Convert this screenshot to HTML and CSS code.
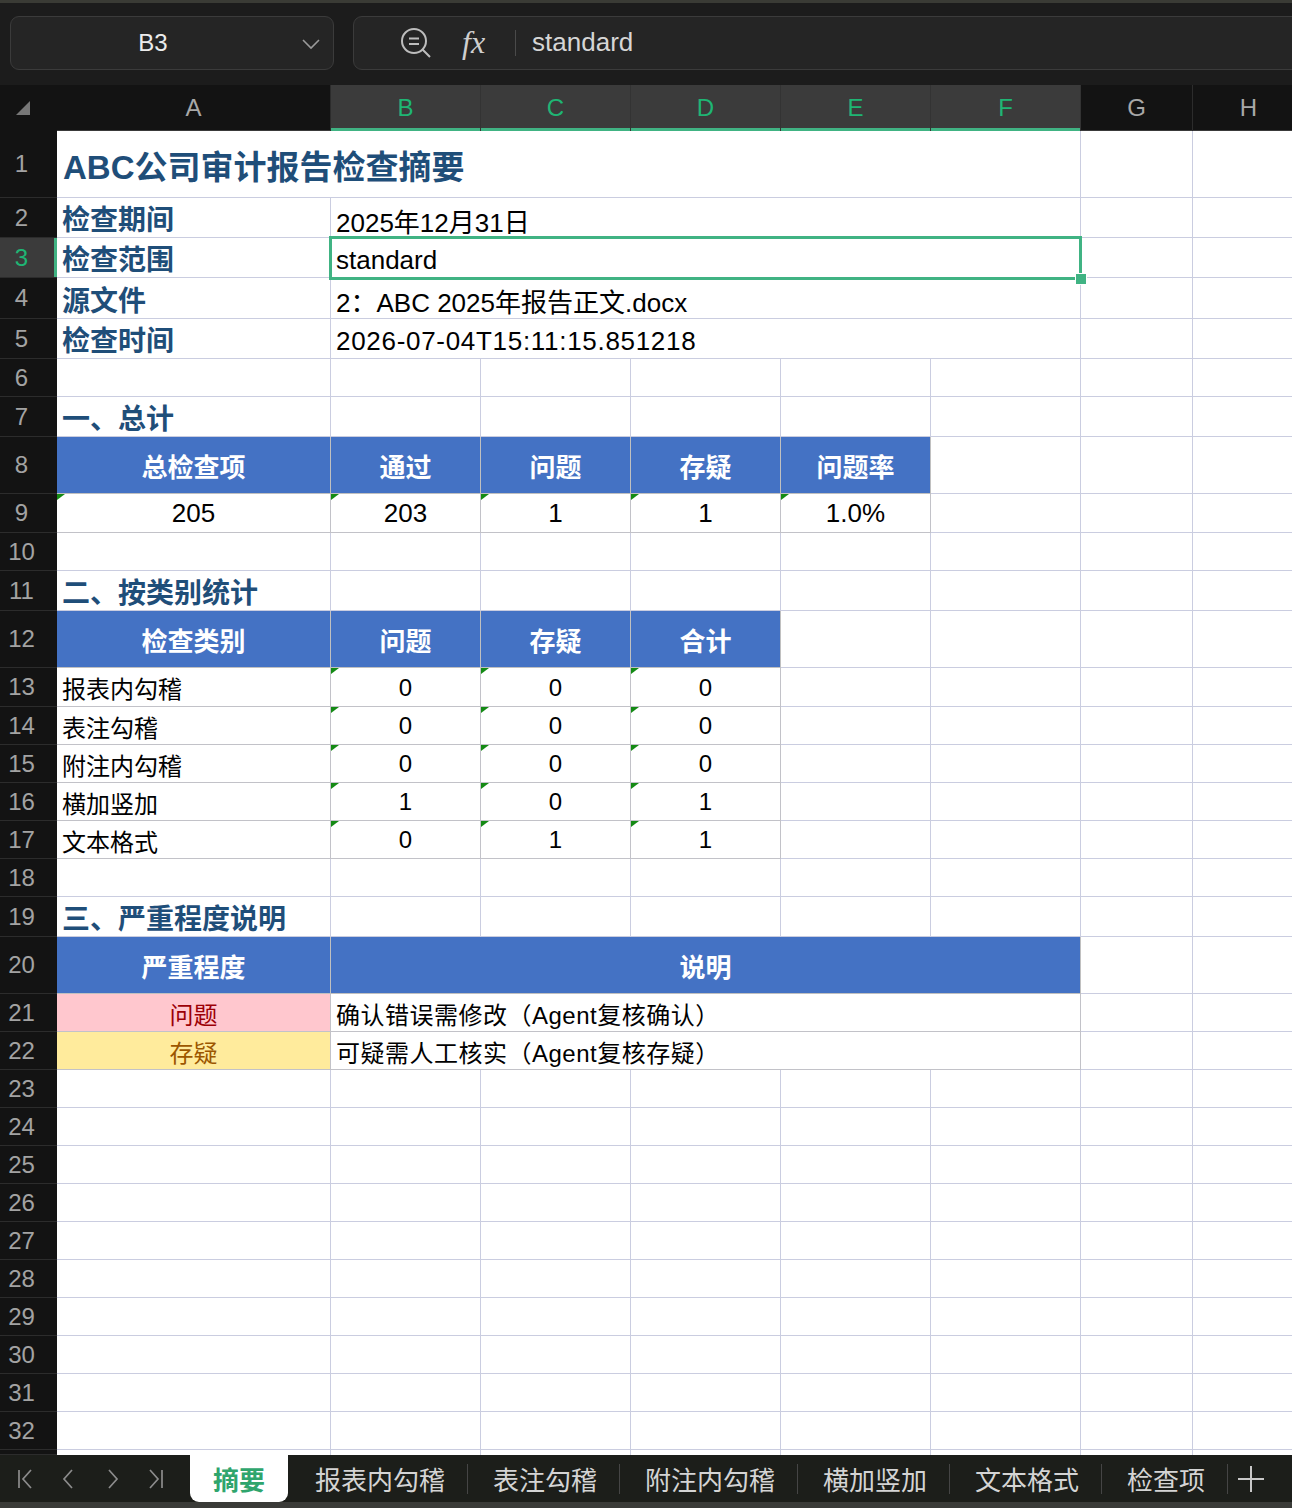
FILE: index.html
```html
<!DOCTYPE html>
<html lang="zh-CN">
<head>
  <meta charset="UTF-8" />
  <meta name="viewport" content="width=device-width, initial-scale=1.0"/>
  <title>ABC公司审计报告检查摘要</title>
  <link rel="stylesheet" href="styles.css">
</head>
<body>
  <div class="topbar">
    <div class="namebox">
      <span class="cellref">B3</span>
      <svg class="chev" width="20" height="14" viewBox="0 0 20 14"><path d="M2 3 L10 11 L18 3" /></svg>
    </div>
    <div class="formula">
      <svg class="zoomout" width="34" height="34" viewBox="0 0 34 34">
        <circle cx="15" cy="15" r="12" />
        <path d="M10 12.5h10 M10 18h10 M23.5 23.5 L31 31" />
      </svg>
      <span class="fx">fx</span>
      <span class="fsep"></span>
      <span class="ftext">standard</span>
    </div>
  </div>

  <div class="colheads">
    <div class="ch corner"><svg width="16" height="16" viewBox="0 0 16 16"><path d="M15 1 L15 15 L1 15 Z" /></svg></div>
    <div class="ch">A</div>
    <div class="ch on">B</div>
    <div class="ch on">C</div>
    <div class="ch on">D</div>
    <div class="ch on">E</div>
    <div class="ch on">F</div>
    <div class="ch">G</div>
    <div class="ch">H</div>
  </div>

  <div class="sheet">
    <div class="row h67">
      <div class="rh">1</div>
      <div class="c s6 title">ABC公司审计报告检查摘要</div>
      <div class="c"></div><div class="c"></div>
    </div>
    <div class="row h40">
      <div class="rh">2</div>
      <div class="c lbl">检查期间</div>
      <div class="c s5 val">2025年12月31日</div>
      <div class="c"></div><div class="c"></div>
    </div>
    <div class="row h40">
      <div class="rh on">3</div>
      <div class="c lbl">检查范围</div>
      <div class="c s5 val sel">standard<span class="handle"></span></div>
      <div class="c"></div><div class="c"></div>
    </div>
    <div class="row h41">
      <div class="rh">4</div>
      <div class="c lbl">源文件</div>
      <div class="c s5 val">2：ABC 2025年报告正文.docx</div>
      <div class="c"></div><div class="c"></div>
    </div>
    <div class="row h40">
      <div class="rh">5</div>
      <div class="c lbl">检查时间</div>
      <div class="c s5 val ts">2026-07-04T15:11:15.851218</div>
      <div class="c"></div><div class="c"></div>
    </div>
    <div class="row h38">
      <div class="rh">6</div>
      <div class="c"></div><div class="c"></div><div class="c"></div><div class="c"></div>
      <div class="c"></div><div class="c"></div><div class="c"></div><div class="c"></div>
    </div>
    <div class="row h40">
      <div class="rh">7</div>
      <div class="c lbl">一、总计</div>
      <div class="c"></div><div class="c"></div><div class="c"></div>
      <div class="c"></div><div class="c"></div><div class="c"></div><div class="c"></div>
    </div>
    <div class="row h57">
      <div class="rh">8</div>
      <div class="c hd">总检查项</div>
      <div class="c hd">通过</div>
      <div class="c hd">问题</div>
      <div class="c hd">存疑</div>
      <div class="c hd">问题率</div>
      <div class="c"></div><div class="c"></div><div class="c"></div>
    </div>
    <div class="row h39">
      <div class="rh">9</div>
      <div class="c tb num big">205</div>
      <div class="c tb num big">203</div>
      <div class="c tb num big">1</div>
      <div class="c tb num big">1</div>
      <div class="c tb num big">1.0%</div>
      <div class="c"></div><div class="c"></div><div class="c"></div>
    </div>
    <div class="row h38">
      <div class="rh">10</div>
      <div class="c"></div><div class="c"></div><div class="c"></div><div class="c"></div>
      <div class="c"></div><div class="c"></div><div class="c"></div><div class="c"></div>
    </div>
    <div class="row h40">
      <div class="rh">11</div>
      <div class="c lbl">二、按类别统计</div>
      <div class="c"></div><div class="c"></div><div class="c"></div>
      <div class="c"></div><div class="c"></div><div class="c"></div><div class="c"></div>
    </div>
    <div class="row h57">
      <div class="rh">12</div>
      <div class="c hd">检查类别</div>
      <div class="c hd">问题</div>
      <div class="c hd">存疑</div>
      <div class="c hd">合计</div>
      <div class="c"></div><div class="c"></div><div class="c"></div><div class="c"></div>
    </div>
    <div class="row h39">
      <div class="rh">13</div>
      <div class="c tb">报表内勾稽</div>
      <div class="c tb num">0</div><div class="c tb num">0</div><div class="c tb num">0</div>
      <div class="c"></div><div class="c"></div><div class="c"></div><div class="c"></div>
    </div>
    <div class="row h38">
      <div class="rh">14</div>
      <div class="c tb">表注勾稽</div>
      <div class="c tb num">0</div><div class="c tb num">0</div><div class="c tb num">0</div>
      <div class="c"></div><div class="c"></div><div class="c"></div><div class="c"></div>
    </div>
    <div class="row h38">
      <div class="rh">15</div>
      <div class="c tb">附注内勾稽</div>
      <div class="c tb num">0</div><div class="c tb num">0</div><div class="c tb num">0</div>
      <div class="c"></div><div class="c"></div><div class="c"></div><div class="c"></div>
    </div>
    <div class="row h38">
      <div class="rh">16</div>
      <div class="c tb">横加竖加</div>
      <div class="c tb num">1</div><div class="c tb num">0</div><div class="c tb num">1</div>
      <div class="c"></div><div class="c"></div><div class="c"></div><div class="c"></div>
    </div>
    <div class="row h38">
      <div class="rh">17</div>
      <div class="c tb">文本格式</div>
      <div class="c tb num">0</div><div class="c tb num">1</div><div class="c tb num">1</div>
      <div class="c"></div><div class="c"></div><div class="c"></div><div class="c"></div>
    </div>
    <div class="row h38">
      <div class="rh">18</div>
      <div class="c"></div><div class="c"></div><div class="c"></div><div class="c"></div>
      <div class="c"></div><div class="c"></div><div class="c"></div><div class="c"></div>
    </div>
    <div class="row h40">
      <div class="rh">19</div>
      <div class="c lbl">三、严重程度说明</div>
      <div class="c"></div><div class="c"></div><div class="c"></div>
      <div class="c"></div><div class="c"></div><div class="c"></div><div class="c"></div>
    </div>
    <div class="row h57">
      <div class="rh">20</div>
      <div class="c hd">严重程度</div>
      <div class="c hd s5">说明</div>
      <div class="c"></div><div class="c"></div>
    </div>
    <div class="row h38">
      <div class="rh">21</div>
      <div class="c tb ctr bad">问题</div>
      <div class="c tb s5 note">确认错误需修改（Agent复核确认）</div>
      <div class="c"></div><div class="c"></div>
    </div>
    <div class="row h38">
      <div class="rh">22</div>
      <div class="c tb ctr warn">存疑</div>
      <div class="c tb s5 note">可疑需人工核实（Agent复核存疑）</div>
      <div class="c"></div><div class="c"></div>
    </div>
    <div class="row h38"><div class="rh">23</div><div class="c"></div><div class="c"></div><div class="c"></div><div class="c"></div><div class="c"></div><div class="c"></div><div class="c"></div><div class="c"></div></div>
    <div class="row h38"><div class="rh">24</div><div class="c"></div><div class="c"></div><div class="c"></div><div class="c"></div><div class="c"></div><div class="c"></div><div class="c"></div><div class="c"></div></div>
    <div class="row h38"><div class="rh">25</div><div class="c"></div><div class="c"></div><div class="c"></div><div class="c"></div><div class="c"></div><div class="c"></div><div class="c"></div><div class="c"></div></div>
    <div class="row h38"><div class="rh">26</div><div class="c"></div><div class="c"></div><div class="c"></div><div class="c"></div><div class="c"></div><div class="c"></div><div class="c"></div><div class="c"></div></div>
    <div class="row h38"><div class="rh">27</div><div class="c"></div><div class="c"></div><div class="c"></div><div class="c"></div><div class="c"></div><div class="c"></div><div class="c"></div><div class="c"></div></div>
    <div class="row h38"><div class="rh">28</div><div class="c"></div><div class="c"></div><div class="c"></div><div class="c"></div><div class="c"></div><div class="c"></div><div class="c"></div><div class="c"></div></div>
    <div class="row h38"><div class="rh">29</div><div class="c"></div><div class="c"></div><div class="c"></div><div class="c"></div><div class="c"></div><div class="c"></div><div class="c"></div><div class="c"></div></div>
    <div class="row h38"><div class="rh">30</div><div class="c"></div><div class="c"></div><div class="c"></div><div class="c"></div><div class="c"></div><div class="c"></div><div class="c"></div><div class="c"></div></div>
    <div class="row h38"><div class="rh">31</div><div class="c"></div><div class="c"></div><div class="c"></div><div class="c"></div><div class="c"></div><div class="c"></div><div class="c"></div><div class="c"></div></div>
    <div class="row h38"><div class="rh">32</div><div class="c"></div><div class="c"></div><div class="c"></div><div class="c"></div><div class="c"></div><div class="c"></div><div class="c"></div><div class="c"></div></div>
    <div class="row h5"><div class="rh"></div><div class="c"></div><div class="c"></div><div class="c"></div><div class="c"></div><div class="c"></div><div class="c"></div><div class="c"></div><div class="c"></div></div>
  </div>

  <div class="tabs">
    <div class="tabnav">
      <span class="navbtn"><svg width="24" height="24" viewBox="0 0 24 24"><path d="M5 3v18 M17 3 L9 12 L17 21" /></svg></span>
      <span class="navbtn"><svg width="24" height="24" viewBox="0 0 24 24"><path d="M15 3 L7 12 L15 21" /></svg></span>
      <span class="navbtn"><svg width="24" height="24" viewBox="0 0 24 24"><path d="M9 3 L17 12 L9 21" /></svg></span>
      <span class="navbtn"><svg width="24" height="24" viewBox="0 0 24 24"><path d="M7 3 L15 12 L7 21 M19 3v18" /></svg></span>
    </div>
    <div class="tab active">摘要</div>
    <div class="tab">报表内勾稽</div>
    <span class="tsep"></span>
    <div class="tab">表注勾稽</div>
    <span class="tsep"></span>
    <div class="tab">附注内勾稽</div>
    <span class="tsep"></span>
    <div class="tab">横加竖加</div>
    <span class="tsep"></span>
    <div class="tab">文本格式</div>
    <span class="tsep"></span>
    <div class="tab">检查项</div>
    <span class="tsep"></span>
    <div class="tab add"><svg width="28" height="28" viewBox="0 0 28 28"><path d="M14 1v26 M1 14h26" /></svg></div>
  </div>
</body>
</html>
```

FILE: styles.css
```css
body {
  margin: 0;
  width: 1292px;
  height: 1508px;
  overflow: hidden;
  background-color: #3a3b38;
  font-family: "Liberation Sans", "Noto Sans CJK SC", sans-serif;
  color: #000;
}

/* top: name box + formula bar */
.topbar {
  height: 85px;
  box-sizing: border-box;
  border-top: 3px solid #3a3b35;
  background: #1c1c1c;
  display: flex;
  align-items: center;
  gap: 19px;
  padding: 0 0 0 10px;
  overflow: hidden;
}
.namebox {
  width: 324px;
  height: 54px;
  box-sizing: border-box;
  margin-top: -3px;
  background: #252525;
  border: 1px solid #3b3b3b;
  border-radius: 9px;
  display: flex;
  align-items: center;
  position: relative;
}
.cellref {
  flex: 1;
  text-align: center;
  padding-right: 38px;
  color: #ececec;
  font-size: 24px;
}
.chev {
  position: absolute;
  right: 12px;
  top: 20px;
  fill: none;
  stroke: #9a9a9a;
  stroke-width: 1.6;
}
.formula {
  flex: 1;
  margin-right: -30px;
  height: 54px;
  box-sizing: border-box;
  margin-top: -3px;
  background: #252525;
  border: 1px solid #3b3b3b;
  border-radius: 9px;
  display: flex;
  align-items: center;
  padding-left: 45px;
}
.zoomout {
  fill: none;
  stroke: #bdbdbd;
  stroke-width: 2;
}
.fx {
  margin-left: 29px;
  font-family: "Liberation Serif", serif;
  font-style: italic;
  font-size: 32px;
  color: #cfcfcf;
}
.fsep {
  width: 1px;
  height: 26px;
  background: #4a4a4a;
  margin-left: 30px;
}
.ftext {
  margin-left: 16px;
  color: #d6d6d6;
  font-size: 26px;
}

/* column headers */
.colheads,
.row {
  display: grid;
  grid-template-columns: 57px 274px repeat(5, 150px) 112px 112px;
}
.colheads {
  height: 46px;
  background: #131313;
}
.ch {
  display: flex;
  align-items: center;
  justify-content: center;
  color: #a8a8a8;
  font-size: 24px;
  border-right: 1px solid #2c2c2c;
  box-shadow: inset 0 -1px 0 #3a3a3a;
}
.ch.on {
  background: #3b3b3b;
  color: #1fb574;
  border-right-color: #333;
  box-shadow: inset 0 -3px 0 #40b383;
}
.ch.corner {
  justify-content: flex-start;
  padding-left: 15px;
  border-right: none;
  box-shadow: none;
}
.ch.corner svg {
  fill: #777;
}

/* grid */
.sheet {
  background: #fff;
}
.h67 { height: 67px; }
.h57 { height: 57px; }
.h41 { height: 41px; }
.h40 { height: 40px; }
.h39 { height: 39px; }
.h38 { height: 38px; }
.h5 { height: 5px; }

.rh {
  background: #131313;
  color: #a3a3a3;
  font-size: 24px;
  display: flex;
  align-items: center;
  justify-content: center;
  padding-right: 14px;
  box-sizing: border-box;
  border-bottom: 1px solid #2c2c2c;
}
.rh.on {
  background: #3b3b3b;
  color: #1fb574;
  box-shadow: inset -3px 0 0 #40b383;
}
.c {
  box-sizing: border-box;
  border-right: 1px solid #cacde0;
  border-bottom: 1px solid #cacde0;
  display: flex;
  align-items: center;
  padding: 1px 5px 0;
  white-space: nowrap;
  overflow: hidden;
  position: relative;
  font-size: 24px;
}
.s5 { grid-column: span 5; }
.s6 { grid-column: span 6; }
.h5 .c { border-bottom: none; }

.title {
  font-size: 33px;
  font-weight: bold;
  color: #1f4e79;
  padding-left: 6px;
}
.lbl {
  font-size: 28px;
  font-weight: bold;
  color: #1f4e79;
}
.val {
  font-size: 26px;
  padding-top: 5px;
}
.ts {
  letter-spacing: 0.7px;
}
.note {
  letter-spacing: 0.5px;
}
.hd {
  background: #4472c4;
  color: #fff;
  font-weight: bold;
  font-size: 26px;
  justify-content: center;
  border-right-color: #c0c0c0;
  border-bottom-color: #c0c0c0;
}
.tb {
  border-right-color: #c2c2c8;
  border-bottom-color: #c2c2c8;
}
.num,
.ctr {
  justify-content: center;
}
.big {
  font-size: 26px;
}
.num::before {
  content: '';
  position: absolute;
  left: 0;
  top: 0;
  border-top: 6px solid #148a14;
  border-right: 8px solid transparent;
}
.bad {
  background: #ffc7ce;
  color: #9c0006;
}
.warn {
  background: #ffeb9c;
  color: #9c5700;
}

/* selection B3:F3 */
.sel {
  overflow: visible;
  z-index: 2;
}
.sel::after {
  content: '';
  position: absolute;
  left: -2px;
  top: -2px;
  right: -2px;
  bottom: -3px;
  border: 3px solid #40b383;
  pointer-events: none;
}
.handle {
  position: absolute;
  right: -7px;
  bottom: -8px;
  width: 10px;
  height: 10px;
  background: #40b383;
  border: 1px solid #fff;
  z-index: 3;
}

/* sheet tabs */
.tabs {
  height: 47px;
  background: #1c1e1a;
  display: flex;
  align-items: stretch;
  box-sizing: border-box;
}
.tabnav {
  display: flex;
  align-items: center;
  padding-left: 4px;
  margin-right: 14px;
}
.navbtn {
  width: 43px;
  display: flex;
  justify-content: center;
}
.navbtn svg {
  fill: none;
  stroke: #8c8c8c;
  stroke-width: 1.7;
}
.tab {
  display: flex;
  align-items: center;
  padding: 0 22px 0 25px;
  color: #d4d4d4;
  font-size: 26px;
}
.tab.active {
  background: #fff;
  color: #2fa56d;
  font-weight: bold;
  padding: 0 23px;
  border-radius: 0 0 9px 9px;
  margin-right: 2px;
}
.tab.add {
  padding: 0 0 0 9px;
}
.tab.add svg {
  fill: none;
  stroke: #c8c8c8;
  stroke-width: 2;
}
.tsep {
  width: 1px;
  height: 30px;
  align-self: center;
  background: #454545;
}
```
